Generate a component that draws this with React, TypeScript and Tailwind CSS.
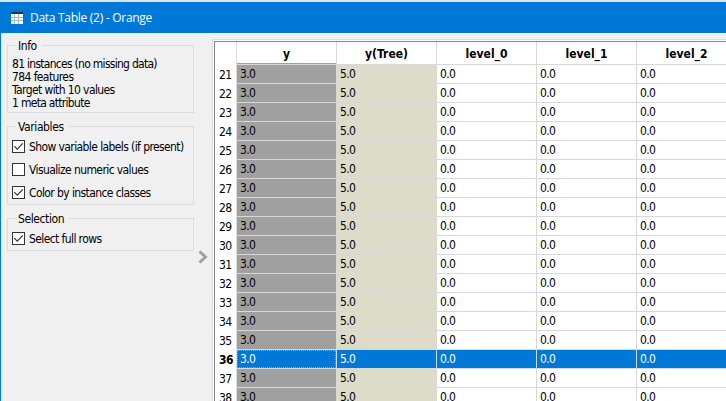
import type { ReactNode } from "react";

const rows = Array.from({ length: 18 }, (_, i) => 21 + i);
const columns = [
  { name: "y", value: "3.0", fill: "bg-[#a0a0a0]" },
  { name: "y(Tree)", value: "5.0", fill: "bg-[#dcdcc8]" },
  { name: "level_0", value: "0.0", fill: "bg-white" },
  { name: "level_1", value: "0.0", fill: "bg-white" },
  { name: "level_2", value: "0.0", fill: "bg-white" },
];

function Group({ title, className, children }: { title: string; className: string; children: ReactNode }) {
  return (
    <section className={`relative w-[187px] border border-[#dcdcdc] ${className}`}>
      <h2 className="absolute -top-[8px] left-[7px] bg-[#f0f0f0] pr-[5px] pl-[3px] leading-[16px] tracking-[-0.4px]">{title}</h2>
      {children}
    </section>
  );
}

function Check({ label, checked }: { label: string; checked?: boolean }) {
  return (
    <label className="flex h-[13px] items-center gap-[4px]">
      <svg className="shrink-0" width="13" height="13" viewBox="0 0 13 13">
        <rect x=".5" y=".5" width="12" height="12" fill="#fff" stroke="#333" />
        {checked && <path d="M2.3 6.2 5.2 9.1 10.8 3.4" fill="none" stroke="#333" strokeWidth="1.2" />}
      </svg>
      <span className="pt-px leading-[13px]">{label}</span>
    </label>
  );
}

export default function App() {
  return (
    <div className="flex h-[401px] w-[726px] flex-col overflow-hidden bg-[#f0f0f0] font-['DejaVu_Sans_Condensed','DejaVu_Sans',sans-serif] text-[12px] tracking-[-0.6px] whitespace-nowrap text-black">
      <div className="h-[2px] shrink-0 bg-[#dfe3e6]" />
      <header className="flex h-[31px] shrink-0 items-center bg-[#0078d7] pl-[11px] text-white">
        <svg width="12" height="12" viewBox="0 0 12 12" shapeRendering="crispEdges">
          <path d="M0 0h12v12H0z" fill="#fff" />
          <path d="M0 0h12v2H0z" fill="#333" />
          <path d="M3.5 2v10M7.5 2v10M0 5.5h12M0 8.5h12" stroke="#a9b8c5" />
        </svg>
        <h1 className="ml-[7px] pt-px font-['Open_Sans',sans-serif] text-[12px] tracking-[-0.28px]">Data Table (2) - Orange</h1>
      </header>
      <main className="flex min-h-0 grow border-l border-[#0078d7]">
        <aside className="ml-[6px] w-[187px] shrink-0 pt-[12px]">
          <Group title="Info" className="h-[68px] pt-[12px] pl-[4px] leading-[13px]">
            <p className="tracking-[-0.72px]">81 instances (no missing data)</p>
            <p>784 features</p>
            <p>Target with 10 values</p>
            <p className="tracking-[-0.7px]">1 meta attribute</p>
          </Group>
          <Group title="Variables" className="mt-[13px] flex h-[79px] flex-col gap-[10px] pt-[13px] pl-[4px]">
            <Check label="Show variable labels (if present)" checked />
            <Check label="Visualize numeric values" />
            <Check label="Color by instance classes" checked />
          </Group>
          <Group title="Selection" className="mt-[13px] h-[33px] pt-[13px] pl-[4px]">
            <Check label="Select full rows" checked />
          </Group>
        </aside>
        <div className="w-[18px] shrink-0 pt-[217px] pl-[4px]">
          <svg width="10" height="14" viewBox="0 0 10 14">
            <path d="m1.5 1.5 6 5.5-6 5.5" fill="none" stroke="#a0a0a0" strokeWidth="3" />
          </svg>
        </div>
        <div className="mt-[6px] grow overflow-hidden border-t border-l border-[#dcdcdc] bg-white pt-px pl-px">
          <div className="border-t border-l border-[#828790]">
            <div className="flex h-[23px] font-bold tracking-normal">
              <div className="w-[22px] shrink-0 border-r border-[#dcdcdc]" />
              {columns.map((c, i) => (
                <div
                  key={c.name}
                  className={`flex w-[100px] shrink-0 items-center justify-center border-r border-b border-[#d8d8d8] pt-px ${i === 0 ? "shadow-[inset_0_-1px_0_#a0a0a0]" : ""}`}
                >
                  {c.name}
                </div>
              ))}
            </div>
            {rows.map((r) => (
              <div key={r} className="flex h-[19px]">
                <div className={`flex w-[22px] shrink-0 items-center border-r border-[#dcdcdc] pl-[4px] ${r === 36 ? "font-bold" : ""}`}>
                  {r}
                </div>
                {columns.map((c, i) => (
                  <div
                    key={c.name}
                    className={`flex w-[100px] shrink-0 items-center border-r border-b border-[#d8d8d8] ${r === 36 ? "bg-[#0078d7] text-white" : c.fill}`}
                  >
                    <span
                      className={`flex h-full w-full items-center ${r === 36 && i === 0 ? "border border-dotted border-[#ff8728] pl-[2px]" : "pl-[3px]"}`}
                    >
                      {c.value}
                    </span>
                  </div>
                ))}
              </div>
            ))}
          </div>
        </div>
      </main>
    </div>
  );
}
